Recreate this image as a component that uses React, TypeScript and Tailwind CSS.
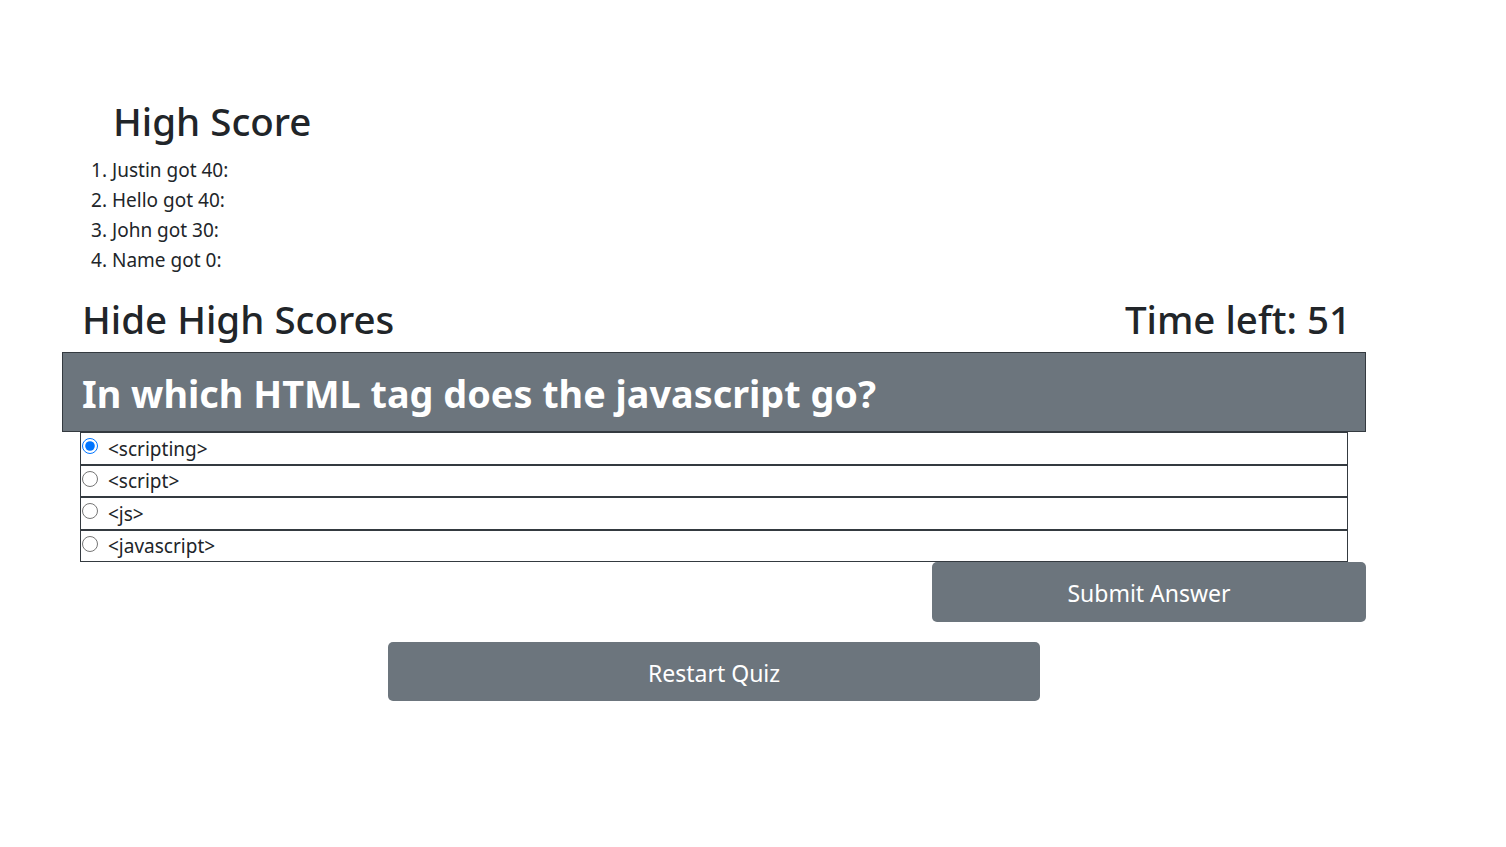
import { useState } from "react";

const SCORES = [
  { name: "Justin", score: 40 },
  { name: "Hello", score: 40 },
  { name: "John", score: 30 },
  { name: "Name", score: 0 },
];

const CHOICES = ["<scripting>", "<script>", "<js>", "<javascript>"];

export default function App() {
  const [picked, setPicked] = useState(0);

  return (
    <div className="min-h-screen bg-white text-[#212529] font-['Noto_Sans',sans-serif]">
      <div className="pl-[62px] pt-[97px] w-[1366px]">
        {/* High score list */}
        <h1 className="pl-[51px] text-[38.5px] leading-[48px] font-medium">High Score</h1>
        <ol className="list-decimal pl-[50px] mt-[10px] text-[19px] leading-[30px]">
          {SCORES.map((s) => (
            <li key={s.name}>
              {s.name} got {s.score}:
            </li>
          ))}
        </ol>

        {/* Toggle + timer */}
        <div className="flex justify-between items-end pl-[20px] pr-[15px] mt-[20px] h-[57px] pb-[9px] text-[38.5px] leading-[48px] font-medium">
          <span>Hide High Scores</span>
          <span>Time left: 51</span>
        </div>

        {/* Question */}
        <div className="h-[80px] bg-[#6c757d] border border-[#343a40] px-[19px] pt-[3px] flex items-center">
          <h1 className="text-[37.8px] leading-[48px] font-bold text-white">
            In which HTML tag does the javascript go?
          </h1>
        </div>

        {/* Choices */}
        <div className="mx-[18px] flex flex-col">
          {CHOICES.map((c, i) => (
            <label
              key={c}
              className="h-[32.5px] border border-[#343a40] flex items-center gap-[10px] pl-[1px] pt-[1px] text-[19px] cursor-pointer"
            >
              <input
                type="radio"
                name="choice"
                checked={picked === i}
                onChange={() => setPicked(i)}
                className="m-0 w-[16px] h-[16px] -mt-[5px]"
              />
              <span>{c}</span>
            </label>
          ))}
        </div>

        {/* Submit */}
        <div className="flex justify-end">
          <button className="w-[434px] h-[60px] pt-[2px] rounded-[5px] bg-[#6c757d] text-white text-[23px]">
            Submit Answer
          </button>
        </div>

        {/* Restart */}
        <div className="pl-[326px] mt-[20px]">
          <button className="w-[652px] h-[59px] pt-[3px] rounded-[5px] bg-[#6c757d] text-white text-[23px]">
            Restart Quiz
          </button>
        </div>
      </div>
    </div>
  );
}
